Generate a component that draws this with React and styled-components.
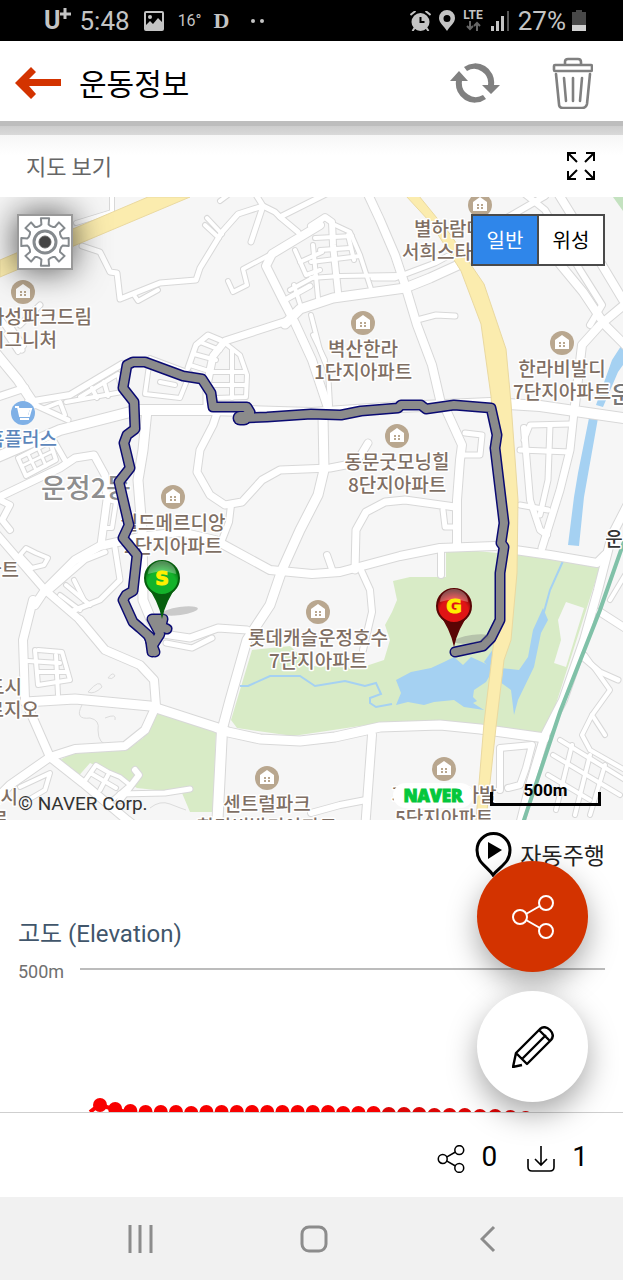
import React from "react";
import styled, { createGlobalStyle } from "styled-components";

const GlobalStyle = createGlobalStyle`
  *, *::before, *::after { box-sizing: border-box; }
  html, body { margin: 0; padding: 0; background: #fff; }
  body { font-family: Roboto, "Noto Sans CJK KR", sans-serif; color: #000; }
  button { font: inherit; color: inherit; padding: 0; border: 0; background: none; cursor: pointer; }
  svg { display: block; }
`;

const Page = styled.div`
  display: flex;
  flex-direction: column;
  min-height: 100vh;
`;

/* ---------- status bar ---------- */

const StatusBar = styled.div`
  display: flex;
  align-items: center;
  justify-content: space-between;
  height: 41px;
  padding: 0 37px 0 44px;
  background: #000;
  color: #c4c4c4;
`;

const StatusGroup = styled.div`
  display: flex;
  align-items: center;
  gap: ${(p) => p.$gap}px;
`;

const StatusText = styled.span`
  font-family: ${(p) => (p.$serif ? '"Liberation Serif", serif' : "Roboto, sans-serif")};
  font-size: ${(p) => p.$size}px;
  font-weight: ${(p) => (p.$bold ? 700 : 400)};
  line-height: 1;
`;

const Carrier = styled(StatusText)`
  display: flex;
  align-items: flex-start;
`;

const Network = styled.span`
  display: flex;
  flex-direction: column;
  align-items: center;
  font-size: 12px;
  font-weight: 700;
  line-height: 11px;
`;

/* ---------- header ---------- */

const Header = styled.header`
  display: flex;
  align-items: center;
  height: 80px;
  padding: 4px 30px 0 15px;
  background: #fff;
`;

const Title = styled.h1`
  flex: 1;
  margin: 0 0 0 18px;
  padding-bottom: 2px;
  font-family: "Noto Sans CJK KR", sans-serif;
  font-size: 30px;
  font-weight: 400;
  line-height: 40px;
`;

const HeaderActions = styled.div`
  display: flex;
  align-items: center;
  gap: 52px;
`;

const Divider = styled.div`
  height: 14px;
  background: linear-gradient(#bdbdbd 0 5px, #cdcdcd 5px, #d9d9d9 14px);
`;

const SectionHead = styled.div`
  display: flex;
  align-items: center;
  justify-content: space-between;
  height: 62px;
  padding: 0 28px 0 26px;
  background: linear-gradient(#f6f6f6, #fff 20px);
`;

const SectionTitle = styled.h2`
  margin: 0;
  padding-bottom: 3px;
  font-family: "Noto Sans CJK KR", sans-serif;
  font-size: 22px;
  font-weight: 400;
  line-height: 30px;
  color: #666;
`;

/* ---------- map ---------- */

const MapArea = styled.section`
  position: relative;
  width: 100%;
  aspect-ratio: 1 / 1;
  overflow: hidden;
  background: #f6f6f6;
`;

const MapSvg = styled.svg`
  width: 100%;
  height: 100%;
`;

const PlaceText = styled.text`
  font-family: "Noto Sans CJK KR", sans-serif;
  font-size: ${(p) => p.$size || 19}px;
  font-weight: 500;
  fill: ${(p) => p.$color || "#7f6f64"};
  stroke: #fff;
  stroke-width: 3px;
  stroke-linejoin: round;
  paint-order: stroke;
  text-anchor: middle;
`;

const PinText = styled.text`
  font-family: "DejaVu Sans", sans-serif;
  font-size: 19px;
  font-weight: 700;
  fill: #fff000;
  stroke: #fff000;
  stroke-width: 1px;
  text-anchor: middle;
`;

const SettingsButton = styled.button`
  position: absolute;
  top: 17px;
  left: 17px;
  width: 56px;
  height: 56px;
  display: flex;
  align-items: center;
  justify-content: center;
  border: 2px solid #999;
  background: #fff;
  box-shadow: 0 0 34px rgba(0, 0, 0, 0.7);
`;

const LayerSwitch = styled.div`
  position: absolute;
  top: 17px;
  right: 18px;
  display: flex;
  border: 2px solid #4a4a4a;
`;

const LayerButton = styled.button`
  width: ${(p) => (p.$active ? 64 : 66)}px;
  height: 48px;
  font-family: "Noto Sans CJK KR", sans-serif;
  font-size: 20px;
  line-height: 48px;
  background: ${(p) => (p.$active ? "#2f86ea" : "#fff")};
  color: ${(p) => (p.$active ? "#fff" : "#000")};
  & + & {
    border-left: 2px solid #4a4a4a;
  }
`;

const Copyright = styled.div`
  position: absolute;
  left: 18px;
  bottom: 5px;
  font-size: 19px;
  line-height: 22px;
  color: #333;
`;

const MapCredits = styled.div`
  position: absolute;
  right: 22px;
  bottom: 12px;
  display: flex;
  align-items: flex-end;
  gap: 17px;
`;

const NaverBadge = styled.div`
  width: 80px;
  height: 25px;
  border-radius: 13px;
  background: #fff;
  color: #04c73c;
  -webkit-text-stroke: 1px #04c73c;
  font-family: "Open Sans", sans-serif;
  font-size: 17px;
  font-weight: 800;
  line-height: 26px;
  text-align: center;
`;

const Scale = styled.div`
  display: flex;
  flex-direction: column;
  align-items: center;
  width: 111px;
  padding-bottom: 2px;
  font-size: 17px;
  font-weight: 700;
  line-height: 16px;
  &::after {
    content: "";
    width: 100%;
    height: 14px;
    margin-top: -6px;
    border: 3px solid #000;
    border-top: 0;
  }
`;

/* ---------- elevation ---------- */

const Panel = styled.section`
  position: relative;
  display: flex;
  flex: 1;
  flex-direction: column;
  min-height: 290px;
  padding: 12px 18px 0;
  border-bottom: 1px solid #cfcfcf;
  background: #fff;
`;

const AutoRun = styled.button`
  display: flex;
  align-items: center;
  align-self: flex-end;
  gap: 8px;
  font-family: "Noto Sans CJK KR", sans-serif;
  font-size: 23px;
  line-height: 45px;
  color: #222;
`;

const ElevationTitle = styled.h2`
  margin: 42px 0 0;
  font-size: 24px;
  font-weight: 400;
  line-height: 30px;
  color: #41566b;
`;

const AxisRow = styled.div`
  display: flex;
  margin-top: 11px;
  font-size: 18px;
  line-height: 24px;
  color: #707070;
`;

const AxisLabel = styled.span`
  width: 62px;
`;

const GridLine = styled.span`
  flex: 1;
  height: 2px;
  margin-top: 8px;
  background: #bcbcbc;
`;

const DotChart = styled.svg`
  margin: auto 0 0 70px;
`;

const FabStack = styled.div`
  position: absolute;
  right: 35px;
  bottom: 10px;
  display: flex;
  flex-direction: column;
  gap: 19px;
`;

const Fab = styled.button`
  display: flex;
  align-items: center;
  justify-content: center;
  width: 111px;
  height: 111px;
  border-radius: 50%;
  background: ${(p) => (p.$primary ? "#d33300" : "#fff")};
  box-shadow: 0 12px 30px rgba(0, 0, 0, 0.34);
`;

/* ---------- bottom ---------- */

const Footer = styled.footer`
  display: flex;
  align-items: center;
  justify-content: flex-end;
  gap: 30px;
  height: 84px;
  padding: 4px 35px 0 18px;
  background: #fff;
`;

const Counter = styled.button`
  display: flex;
  align-items: center;
  gap: 17px;
  font-size: 28px;
  line-height: 32px;
  svg {
    margin-top: 4px;
  }
`;

const NavBar = styled.nav`
  display: grid;
  grid-template-columns: repeat(3, 1fr);
  height: 83px;
  padding: 0 48px 0 54px;
  background: #f1f1f1;
`;

const NavButton = styled.button`
  display: flex;
  align-items: center;
  justify-content: center;
`;

/* ---------- map data ---------- */

const ROADS = [
  [4, "112,190 112,212 76,223"],
  [5, "82,246 100,252 110,272 117,273 120,299 160,283 196,280 200,268 222,232 238,214 263,206 275,212 280,217 298,232"],
  [4, "222,234 207,218"],
  [4, "219,238 205,225"],
  [5, "263,206 251,242"],
  [5, "253,190 263,206"],
  [5, "330,192 280,217"],
  [4, "220,201 232,192"],
  [4, "320,223 275,252 243,269 247,285 233,292 228,281"],
  [4, "134,295 138,301 158,290"],
  [8, "320,225 272,254 266,266 283,300 295,323 312,360 328,408"],
  [5, "285,300 310,286"],
  [4, "294,285 300,304"],
  [4, "295,250 306,275 320,270"],
  [4, "300,262 322,252"],
  [4, "290,290 316,276"],
  [9, "285,324 300,309 333,298 405,288 430,278 465,262"],
  [7, "290,320 225,341 213,356 207,385 207,405"],
  [5, "188,368 196,345 208,335 220,340"],
  [4, "190,365 212,372"],
  [4, "194,354 216,360"],
  [4, "200,342 220,350"],
  [4, "225,343 240,355 247,375 246,397 215,398"],
  [4, "211,385 246,385"],
  [4, "213,372 244,372"],
  [4, "232,350 232,398"],
  [4, "150,358 190,373 180,398 145,394 150,358"],
  [4, "160,382 175,385"],
  [9, "-5,352 18,380 34,404"],
  [5, "0,318 22,350"],
  [4, "10,325 24,346 18,352 6,334"],
  [5, "20,325 40,305"],
  [7, "-5,398 25,388"],
  [6, "28,402 70,395 122,364"],
  [4, "80,397 118,374 122,392 66,402"],
  [4, "92,388 97,398"],
  [4, "104,382 108,396"],
  [5, "35,405 68,420"],
  [4, "45,408 60,402 65,415"],
  [10, "-5,458 60,430 138,410 210,410 312,413 400,407 490,403 540,406 630,419"],
  [5, "50,434 66,462"],
  [7, "-5,499 60,468 75,458 94,455 105,475 107,500 101,545"],
  [4, "18,458 50,442 56,460 26,476 18,458"],
  [3, "28,454 36,470"],
  [3, "38,448 46,466"],
  [3, "22,466 53,451"],
  [4, "108,500 116,502 112,528 105,528"],
  [9, "147,410 143,450 138,480 142,530 143,600 152,622"],
  [6, "0,500 10,505 2,520 10,530"],
  [7, "-5,532 45,590 80,620"],
  [4, "20,555 26,548 36,553 48,558 44,565 32,568 20,555"],
  [8, "35,605 45,590 75,560 100,546 140,537 180,532 215,540 270,570 312,574 340,572 400,556 440,548 495,546"],
  [5, "48,592 85,560 105,552"],
  [5, "115,548 120,580 100,600 70,612"],
  [4, "60,595 80,610"],
  [4, "66,585 90,605"],
  [4, "74,580 84,600"],
  [7, "217,413 213,425 200,450 197,472 210,495 225,505 242,502 262,480 280,470 330,468 356,463 368,443"],
  [6, "231,505 229,522 222,540"],
  [9, "323,416 324,470 318,495 300,530 282,570 270,605 247,640 230,700 222,730"],
  [7, "355,570 356,530 366,512 385,502 405,500 455,507"],
  [6, "327,555 333,572"],
  [8, "457,547 457,500 460,460 462,445 447,412"],
  [5, "464,455 480,455 482,435 465,433"],
  [5, "443,510 445,527 455,527"],
  [6, "360,568 370,590 372,612 363,650"],
  [6, "441,552 441,575"],
  [8, "515,550 550,555 597,563 605,555"],
  [6, "524,428 530,500 540,530 547,535"],
  [7, "574,412 570,450 560,490 542,548"],
  [5, "524,440 530,425 570,424"],
  [5, "520,450 570,452"],
  [5, "550,425 548,480 540,515"],
  [5, "520,505 548,510"],
  [8, "630,500 612,535 598,590 584,640 563,700 545,735 530,785 520,825"],
  [8, "366,190 380,220 395,255 405,285 417,325 432,365 442,408"],
  [5, "417,320 436,315 455,316"],
  [6, "311,226 325,217 332,222 333,245 338,292"],
  [4, "311,262 360,256"],
  [4, "315,238 352,236"],
  [4, "335,225 350,232 360,255 372,292"],
  [4, "311,278 340,276 400,275"],
  [4, "313,245 318,298"],
  [4, "348,235 354,260"],
  [4, "320,250 350,248"],
  [5, "373,278 395,278 435,263 448,256"],
  [4, "311,315 320,350 328,370 330,405"],
  [4, "313,335 325,360"],
  [6, "520,190 545,210 580,270 602,305 590,325"],
  [8, "556,190 590,245 623,300"],
  [6, "500,222 545,196"],
  [8, "540,240 583,292 605,325 630,350"],
  [8, "630,300 600,325 582,345 575,405"],
  [8, "33,600 23,640 25,700 50,757 83,783 127,820 140,830"],
  [8, "50,757 10,785 -5,800"],
  [8, "50,757 75,749 125,746 145,730 156,706 154,680 140,665 105,650 80,620"],
  [9, "25,702 75,699 150,706 215,727 228,732 260,739 300,741 335,737 380,727 440,725 480,729 545,738"],
  [10, "222,730 217,830"],
  [8, "372,735 365,830"],
  [6, "311,813 340,805 366,800"],
  [7, "163,634 190,638 218,628 247,630"],
  [5, "166,643 192,648 212,638"],
  [4, "38,650 62,652 70,680 38,685 35,650"],
  [4, "28,661 60,663"],
  [4, "38,672 66,672"],
  [4, "56,655 58,695"],
  [6, "135,770 139,775 120,800"],
  [4, "84,782 96,765 108,772 120,777 130,785 108,804"],
  [4, "92,774 116,788"],
  [4, "108,775 100,790"],
  [5, "120,794 165,793 190,789"],
  [4, "20,787 50,773 45,790 28,800"],
  [6, "500,790 500,748 532,745 526,768 520,785 508,788"],
  [5, "580,655 600,672 618,680"],
  [4, "585,655 610,690 592,715 605,735"],
  [4, "592,715 582,735 590,750 625,770"],
  [4, "560,740 625,780"],
  [4, "553,755 620,795"],
  [4, "548,775 590,800"],
  [4, "572,745 556,810"],
  [4, "590,755 575,815"],
  [4, "605,765 590,815"],
  [7, "600,612 625,628"],
  [4, "610,600 625,575"],
];

const ROUTE =
  "152,652 150,637 140,628 133,622 123,600 126,595 133,591 137,555 123,538 129,525 119,482 130,468 124,443 127,435 135,429 134,402 123,388 127,365 133,362 145,362 183,376 202,379 211,393 213,407 247,407 250,412 242,418 267,417 311,414 341,415 361,411 398,408 401,405 421,405 426,409 454,405 491,408 497,435 495,448 504,523 501,543 504,547 500,573 500,620 491,638 483,646 455,652";

const KNOT = "155,652 149,637 153,645 160,634 152,619 163,619 161,627 167,629 157,624";

const PLACES = [
  { x: 363, y: 323, lines: ["벽산한라", "1단지아파트"] },
  { x: 562, y: 343, lines: ["한라비발디", "7단지아파트"] },
  { x: 397, y: 436, lines: ["동문굿모닝힐", "8단지아파트"] },
  { x: 173, y: 497, lines: ["월드메르디앙", "2단지아파트"] },
  { x: 318, y: 612, lines: ["롯데캐슬운정호수", "7단지아파트"] },
  { x: 267, y: 778, lines: ["센트럴파크", "한라비발디아파트"] },
  { x: 444, y: 769, lines: ["가람마을아발", "5단지아파트"] },
  { x: 480, y: 205, lines: [] },
  { x: 23, y: 292, lines: [] },
];

const EDGE_LABELS = [
  { x: 92, y: 324, text: "화성파크드림", end: true },
  { x: 57, y: 347, text: "시그니처", end: true },
  { x: 414, y: 236, text: "별하람마을" },
  { x: 402, y: 259, text: "서희스타힐스" },
  { x: 19, y: 577, text: "아파트", end: true },
  { x: 22, y: 694, text: "신도시", end: true },
  { x: 39, y: 717, text: "푸르지오", end: true },
  { x: 18, y: 804, text: "도시", end: true },
  { x: 8, y: 826, text: "로", end: true },
];

const DOTS = [
  1105, 1109, 1111, 1112, 1112, 1112, 1113, 1112, 1112, 1112, 1112, 1112, 1112, 1112, 1112,
  1112, 1113, 1113, 1113, 1114, 1114, 1114, 1115, 1115, 1115, 1116, 1116, 1117, 1118,
];

function Poi({ x, y, lines }) {
  return (
    <g>
      <circle cx={x} cy={y} r="12" fill="#b9a78f" />
      <path d={`M${x} ${y - 8}l7 5v9h-14v-9z`} fill="#fff" />
      <path
        d={`M${x - 3} ${y}h2m2 0h2M${x - 3} ${y + 3}h2m2 0h2`}
        stroke="#b9a78f"
        strokeWidth="2"
      />
      {lines.map((line, i) => (
        <PlaceText key={line} x={x} y={y + 33 + i * 23}>
          {line}
        </PlaceText>
      ))}
    </g>
  );
}

function Pin({ x, y, letter, light, dark, id }) {
  return (
    <g>
      <ellipse cx={x + 18} cy={y + 33} rx="18" ry="4" fill="#777" opacity=".35" transform={`rotate(-8 ${x + 18} ${y + 33})`} />
      <defs>
        <radialGradient id={id} cx=".5" cy=".7" r=".65">
          <stop offset="0" stopColor={light} />
          <stop offset=".65" stopColor={light} />
          <stop offset="1" stopColor={dark} />
        </radialGradient>
      </defs>
      <path d={`M${x - 16} ${y + 7}Q${x - 4} ${y + 22} ${x} ${y + 41}Q${x + 4} ${y + 22} ${x + 16} ${y + 7}z`} fill={dark} />
      <circle cx={x} cy={y} r="17" fill={`url(#${id})`} stroke={dark} strokeWidth="2" />
      <path d={`M${x - 14} ${y - 4}a14 13 0 0 1 28 0q-14 -5 -28 0z`} fill="#fff" opacity=".3" />
      <PinText x={x} y={y + 7}>{letter}</PinText>
    </g>
  );
}

function CityMap() {
  return (
    <MapSvg viewBox="0 197 623 623" preserveAspectRatio="xMidYMid slice" role="img" aria-label="지도">
      <rect x="0" y="197" width="623" height="623" fill="#f6f6f6" />
      <path d="M446 548L519 555L600 567L546 735L480 726L440 720L380 723L293 736L237 728L231 720L252 650L290 646L311 666L360 668L384 660L390 640L385 625L392 612L397 600L393 581L410 577L446 577z" fill="#d8ebc6" />
      <path d="M158 710L200 722L216 733L213 812L190 812L182 793L137 788L110 772L90 763L75 780L58 761L75 752L127 750L143 738z" fill="#d8ebc6" />
      <path d="M566 602L584 608L566 667L554 663L561 640L558 620z" fill="#f6f6f6" />
      <path d="M613 197h10v14z" fill="#c4e2c0" />
      <g fill="#a5d1f2">
        <path d="M396 680L411 672L431 668L444 662L454 657L463 665L471 657L484 663L494 668L486 682L474 690L473 697L477 701L473 703L484 710L464 707L454 700L434 702L424 705L408 702L396 705L401 693z" />
        <path d="M484 662L496 645L490 668z" />
        <path d="M500 668L519 670L528 657L533 630L543 608L548 620L541 633L534 667L518 700L514 715L511 690L500 682z" />
        <path d="M589 418h9L584 497L579 546L568 545L574 497L578 473z" />
        <path d="M623 343L612 360L596 405L603 407L618 372L623 365z" />
      </g>
      <g fill="none" stroke="#a5d1f2" strokeWidth="2">
        <path d="M240 686L248 686L270 676L300 676L315 686L345 681L365 686L376 683L381 694L370 698L370 703L376 707L392 704" />
        <path d="M563 561L550 590L544 612" />
      </g>
      <g fill="none" stroke="#dcdcdc">
        <path d="M82 705q-8 15 8 13q10 2 8 12q0 15 12 15M105 718q12-5 10 2M88 692q12-14 14-5q-8 8-14 5zM108 678q5-7 7-2q-3 4-7 2M150 808q10-8 20-4t16 6" />
      </g>
      <g fill="none" strokeLinejoin="round" strokeLinecap="round">
        {ROADS.map(([w, pts], i) => (
          <polyline key={i} points={pts} stroke="#d8d8d8" strokeWidth={w + 2} />
        ))}
        {ROADS.map(([w, pts], i) => (
          <polyline key={i} points={pts} stroke="#fff" strokeWidth={w} />
        ))}
      </g>
      <path d="M0 260L148 197H190L0 277z" fill="#fbecae" stroke="#ead9a0" />
      <path d="M406 196L419 196L450 234L484 284L506 349L511 403L518 500L517 573L511 640L504 660L496 727L486 820L476 820L484 723L494 640L503 600L500 520L491 396L481 324L461 271L430 222z" fill="#fbecae" stroke="#ead9a0" />
      <path d="M626 536L600 610L560 712L523 823" fill="none" stroke="#80c1a8" strokeWidth="4" />

      <PlaceText x="86" y="498" $size={27} $color="#8e8e8e">운정2동</PlaceText>
      <PlaceText x="632" y="403" $size={23} $color="#777">운정</PlaceText>
      <PlaceText x="614" y="546" $color="#333">운</PlaceText>
      {PLACES.map((p) => (
        <Poi key={`${p.x}-${p.y}`} {...p} />
      ))}
      {EDGE_LABELS.map((l) => (
        <PlaceText key={l.text} x={l.x} y={l.y} style={{ textAnchor: l.end ? "end" : "start" }}>
          {l.text}
        </PlaceText>
      ))}
      <circle cx="23" cy="413" r="12" fill="#7fb0e6" />
      <path d="M15 407h3l2 9h9l2-7H19M20 419h9" fill="none" stroke="#fff" strokeWidth="2" />
      <path d="M19 409h11l-2 6h-8z" fill="#fff" />
      <PlaceText x="57" y="446" $color="#5c86bb" style={{ textAnchor: "end" }}>홈플러스</PlaceText>

      <g fill="none" strokeLinejoin="round" strokeLinecap="round">
        <g stroke="#0a0a72" strokeWidth="11">
          <polyline points={ROUTE} />
          <polyline points={KNOT} />
          <path d="M240 418h4" strokeWidth="15" />
        </g>
        <g stroke="#8b8b8b" strokeWidth="8">
          <polyline points={ROUTE} />
          <polyline points={KNOT} />
          <path d="M240 418h4" strokeWidth="12" />
        </g>
      </g>
      <Pin id="pinStart" x={162} y={578} letter="S" light="#13b32a" dark="#065f0e" />
      <Pin id="pinGoal" x={454} y={606} letter="G" light="#e01515" dark="#5a0505" />
    </MapSvg>
  );
}

/* ---------- icons ---------- */

const GEAR = (() => {
  const pts = [];
  for (let i = 0; i < 8; i += 1) {
    const a = (i * Math.PI) / 4;
    [[-0.31, 17], [-0.2, 18], [-0.17, 24], [0.17, 24], [0.2, 18], [0.31, 17]].forEach(([d, r]) => {
      pts.push(`${(25 + r * Math.sin(a + d)).toFixed(1)},${(25 - r * Math.cos(a + d)).toFixed(1)}`);
    });
  }
  return pts.join(" ");
})();

function GearIcon() {
  return (
    <svg width="50" height="50" viewBox="0 0 50 50" fill="none" stroke="#858a8e" strokeWidth="2" strokeLinejoin="round">
      <polygon points={GEAR} />
      <circle cx="25" cy="25" r="11" strokeWidth="3" />
      <circle cx="25" cy="25" r="6" fill="#444" stroke="#666" strokeWidth="1" />
    </svg>
  );
}

function ShareIcon({ size, stroke, width }) {
  return (
    <svg width={size} height={size} viewBox="0 0 44 44" fill="none" stroke={stroke} strokeWidth={width}>
      <circle cx="9" cy="22" r="7" />
      <circle cx="35" cy="8" r="7" />
      <circle cx="35" cy="36" r="7" />
      <path d="M15 19L29 11M15 25L29 33" />
    </svg>
  );
}

export default function App() {
  return (
    <Page>
      <GlobalStyle />
      <StatusBar>
        <StatusGroup $gap={14}>
          <StatusGroup $gap={8}>
            <Carrier $size={25} $bold>
              U
              <svg width="11" height="12" viewBox="0 0 11 12" stroke="#c4c4c4" strokeWidth="3">
                <path d="M5 0V11M0 6H11" />
              </svg>
            </Carrier>
            <StatusText $size={26}>5:48</StatusText>
          </StatusGroup>
          <svg width="20" height="20" viewBox="0 0 20 20">
            <rect x="1" y="1" width="18" height="18" rx="1" fill="none" stroke="#c4c4c4" strokeWidth="2" />
            <circle cx="6" cy="6" r="2" fill="#c4c4c4" />
            <path d="M1 15L6 10L9 13L14 7L19 12V19H1z" fill="#c4c4c4" />
          </svg>
          <StatusGroup $gap={12}>
            <StatusText $size={16}>16°</StatusText>
            <StatusGroup $gap={22}>
              <StatusText $size={22} $serif $bold>D</StatusText>
              <svg width="14" height="4" viewBox="0 0 14 4" fill="#c4c4c4">
                <circle cx="2" cy="2" r="2" />
                <circle cx="11" cy="2" r="2" />
              </svg>
            </StatusGroup>
          </StatusGroup>
        </StatusGroup>
        <StatusGroup $gap={8}>
          <svg width="21" height="20" viewBox="0 0 20 20" fill="none" stroke="#c4c4c4">
            <circle cx="10" cy="11" r="9" fill="#c4c4c4" stroke="none" />
            <path d="M10 6V11H14" stroke="#000" strokeWidth="2" />
            <path d="M0 4L5 0M20 4L15 0M4 17L2 20M16 17L18 20" strokeWidth="2" />
          </svg>
          <svg width="16" height="21" viewBox="0 0 16 21">
            <path fillRule="evenodd" d="M8 0a8 8 0 0 1 8 8c0 5-5 8-8 13C5 16 0 13 0 8a8 8 0 0 1 8-8zm0 5a3 3 0 1 0 0 7a3 3 0 1 0 0-7z" fill="#c4c4c4" />
          </svg>
          <Network>
            LTE
            <svg width="15" height="10" viewBox="0 0 15 10" fill="none" stroke="#666" strokeWidth="2">
              <path d="M4 0V8M1 5L4 8L7 5M11 10V2M8 5L11 2L14 5" />
            </svg>
          </Network>
          <svg width="19" height="21" viewBox="0 0 19 21" fill="#c4c4c4">
            <rect x="0" y="16" width="3" height="5" />
            <rect x="5" y="11" width="3" height="10" />
            <rect x="10" y="6" width="3" height="15" />
            <rect x="16" y="1" width="2" height="20" fill="#555" />
          </svg>
          <StatusGroup $gap={6}>
            <StatusText $size={26}>27%</StatusText>
            <svg width="14" height="21" viewBox="0 0 14 21">
              <path d="M4 0H10V2H14V21H0V2H4z" fill="#484848" />
              <rect y="15" width="14" height="6" fill="#d0d0d0" />
            </svg>
          </StatusGroup>
        </StatusGroup>
      </StatusBar>

      <Header>
        <button type="button" aria-label="뒤로">
          <svg width="46" height="34" viewBox="0 0 46 34">
            <path d="M0 17L16 1L21 6L14 13H46V20H14L21 28L16 33z" fill="#d33300" />
          </svg>
        </button>
        <Title>운동정보</Title>
        <HeaderActions>
          <button type="button" aria-label="새로고침">
            <svg width="50" height="42" viewBox="0 0 50 42" fill="#808080">
              <path d="M14 5A19 19 0 0 1 44 23H50L41 32L32 23H38A14 14 0 0 0 17 9z" />
              <path d="M36 37A19 19 0 0 1 6 19H0L9 9L18 19H12A14 14 0 0 0 33 33z" />
            </svg>
          </button>
          <button type="button" aria-label="삭제">
            <svg width="41" height="52" viewBox="0 0 41 52" fill="none" stroke="#808080" strokeWidth="2.6" strokeLinecap="round" strokeLinejoin="round">
              <rect x="2" y="8" width="38" height="6" rx="1" />
              <path d="M13 7V5Q13 2 16 2H26Q29 2 29 5V7M4 17L7 47Q7 51 11 51H30Q34 51 35 47L38 17M12 21L14 44M21 21V44M30 21L28 44" />
            </svg>
          </button>
        </HeaderActions>
      </Header>
      <Divider />

      <SectionHead>
        <SectionTitle>지도 보기</SectionTitle>
        <button type="button" aria-label="전체 화면">
          <svg width="28" height="28" viewBox="0 0 28 28" fill="none" stroke="#000" strokeWidth="2">
            <path d="M1 9V1H9M1 1L10 10M19 1H27V9M27 1L18 10M1 19V27H9M1 27L10 18M27 19V27H19M27 27L18 18" />
          </svg>
        </button>
      </SectionHead>

      <MapArea>
        <CityMap />
        <SettingsButton type="button" aria-label="설정">
          <GearIcon />
        </SettingsButton>
        <LayerSwitch>
          <LayerButton type="button" $active>일반</LayerButton>
          <LayerButton type="button">위성</LayerButton>
        </LayerSwitch>
        <Copyright>© NAVER Corp.</Copyright>
        <MapCredits>
          <NaverBadge>NAVER</NaverBadge>
          <Scale>500m</Scale>
        </MapCredits>
      </MapArea>

      <Panel>
        <AutoRun type="button">
          <svg width="37" height="45" viewBox="0 0 37 45">
            <path d="M18 43C12 34 2 31 2 18A16 16 0 0 1 35 18C35 31 25 34 18 43z" fill="#fff" stroke="#000" strokeWidth="3" />
            <path d="M13 10L27 18L13 27z" fill="#000" />
          </svg>
          자동주행
        </AutoRun>
        <ElevationTitle>고도 (Elevation)</ElevationTitle>
        <AxisRow>
          <AxisLabel>500m</AxisLabel>
          <GridLine />
        </AxisRow>
        <DotChart width="442" height="16" viewBox="88 1096 442 16" role="img" aria-label="고도 그래프">
          <path d="M90 1112L99 1105L114 1109L130 1113" fill="none" stroke="#f00" strokeWidth="4" />
          {DOTS.map((y, i) => (
            <circle key={i} cx={100 + i * 15.2} cy={y} r="7" fill={i > 18 ? "#dc0505" : "#f80000"} />
          ))}
        </DotChart>
        <FabStack>
          <Fab type="button" $primary aria-label="공유">
            <ShareIcon size={44} stroke="#fff" width={2} />
          </Fab>
          <Fab type="button" aria-label="편집">
            <svg width="42" height="42" viewBox="0 0 42 42" fill="none" stroke="#000" strokeWidth="2.4" strokeLinejoin="round">
              <path d="M4 27L28 3Q33 -1 38 4Q43 9 39 14L15 38L4 27zM4 27L1 41L10 39M10 33L34 9M27 4L38 15M9 32L15 38" />
            </svg>
          </Fab>
        </FabStack>
      </Panel>

      <Footer>
        <Counter type="button">
          <ShareIcon size={28} stroke="#000" width={2.4} />
          0
        </Counter>
        <Counter type="button">
          <svg width="28" height="28" viewBox="0 0 28 28" fill="none" stroke="#000" strokeWidth="1.6">
            <path d="M1 14V22Q1 26 5 26H23Q27 26 27 22V14M14 1V20M8 14L14 20L20 14" />
          </svg>
          1
        </Counter>
      </Footer>

      <NavBar>
        <NavButton type="button" aria-label="최근 앱">
          <svg width="25" height="28" viewBox="0 0 25 28" stroke="#8c8c8c" strokeWidth="3">
            <path d="M2 0V28M12 0V28M23 0V28" />
          </svg>
        </NavButton>
        <NavButton type="button" aria-label="홈">
          <svg width="28" height="28" viewBox="0 0 28 28" fill="none" stroke="#8c8c8c" strokeWidth="3">
            <rect x="2" y="2" width="24" height="24" rx="7" />
          </svg>
        </NavButton>
        <NavButton type="button" aria-label="이전">
          <svg width="16" height="28" viewBox="0 0 16 28" fill="none" stroke="#8c8c8c" strokeWidth="3">
            <path d="M14 2L2 14L14 26" />
          </svg>
        </NavButton>
      </NavBar>
    </Page>
  );
}
